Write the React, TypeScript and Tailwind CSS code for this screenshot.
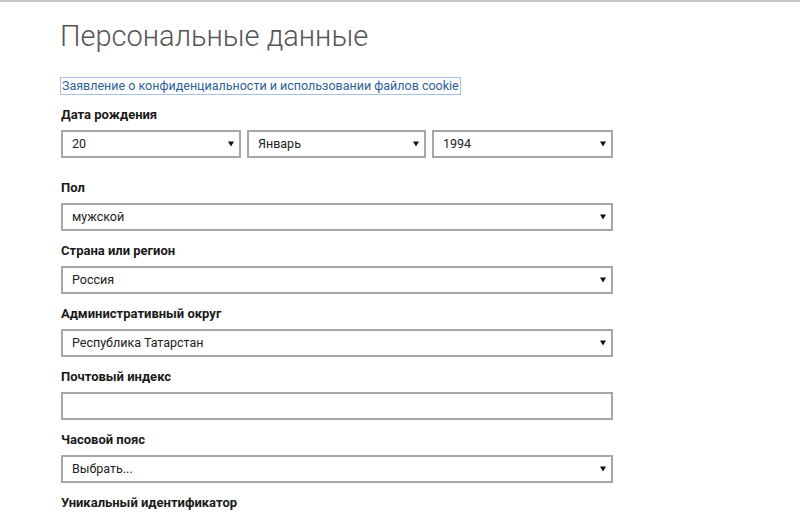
import React from 'react';

// ============================================================
// DADOS
// ============================================================

const font = { fontFamily: 'Roboto, "Noto Sans", sans-serif' };

interface FieldProps {
  label: string;
  value?: string;
  arrow?: boolean;
  first?: boolean;
}

const Arrow = () => (
  <svg width="6" height="6" viewBox="0 0 6 6" className="shrink-0">
    <path d="M0 0.5 H6 L3 5.5 Z" fill="#111" />
  </svg>
);

const SelectBox = ({ value, arrow = true, className = '' }: { value?: string; arrow?: boolean; className?: string }) => (
  <div
    className={`flex h-[28px] items-center justify-between border-2 border-[#a6a6a6] bg-white pl-[9px] pr-[5px] text-[12.5px] text-[#222] ${className}`}
  >
    <span>{value}</span>
    {arrow && <Arrow />}
  </div>
);

const Label = ({ children, className = '' }: { children: React.ReactNode; className?: string }) => (
  <div className={`h-[18px] text-[13px] font-bold leading-[18px] text-[#1a1a1a] ${className}`}>{children}</div>
);

const Field = ({ label, value, arrow = true, first = false }: FieldProps) => (
  <div className={first ? 'mt-[21px]' : 'mt-[11px]'}>
    <Label>{label}</Label>
    <SelectBox value={value} arrow={arrow} className="mt-[6px] w-[552px]" />
  </div>
);

// ============================================================
// COMPONENTE
// ============================================================

export default function App() {
  return (
    <div className="h-[512px] w-[800px] overflow-hidden bg-white" style={font}>
      <div className="h-[2px] bg-[#c6c6c6]" />
      <div className="pl-[61px]">
        <h1 className="-ml-[1px] mt-[14px] h-[40px] text-[29px] font-light leading-[40px] text-[#555]">
          Персональные данные
        </h1>
        <div className="mt-[17px]">
          <span className="-ml-[1px] inline-block h-[18px] border border-[#a9c1e0] px-[1px] text-[12.5px] leading-[16px] text-[#2e5f98]">
            Заявление о конфиденциальности и использовании файлов cookie
          </span>
        </div>

        <Label className="mt-[9px]">Дата рождения</Label>
        <div className="mt-[6px] flex gap-[6px]">
          <SelectBox value="20" className="w-[180px]" />
          <SelectBox value="Январь" className="w-[179px]" />
          <SelectBox value="1994" className="w-[181px]" />
        </div>

        <Field first label="Пол" value="мужской" />
        <Field label="Страна или регион" value="Россия" />
        <Field label="Административный округ" value="Республика Татарстан" />
        <Field label="Почтовый индекс" arrow={false} />
        <Field label="Часовой пояс" value="Выбрать..." />
        <Field label="Уникальный идентификатор" arrow={false} />
      </div>
    </div>
  );
}
